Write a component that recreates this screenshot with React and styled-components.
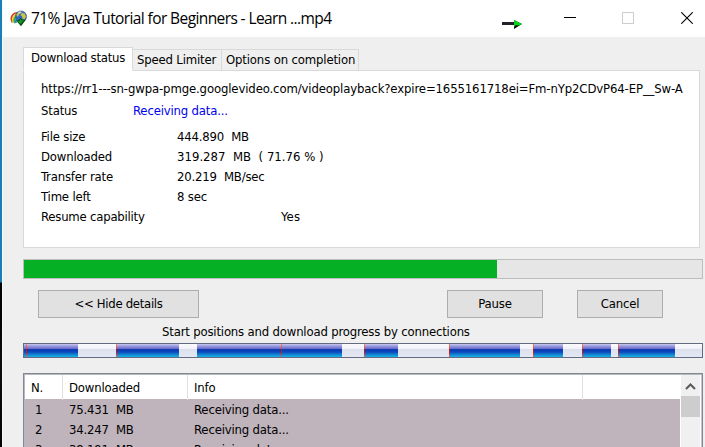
import React from "react";
import styled, { createGlobalStyle } from "styled-components";

const GlobalStyle = createGlobalStyle`
  * { box-sizing: border-box; }
  html, body { margin: 0; padding: 0; overflow: hidden; }
`;

const Desktop = styled.div`
  width: 705px;
  height: 447px;
  padding-left: 2px;
  overflow: hidden;
  background: linear-gradient(#1a80b4 0 282px, #020406 283px 320px, #100c0c 360px, #030405 100%);
`;

const Window = styled.div`
  height: 447px;
  display: flex;
  flex-direction: column;
  background: #efefef;
  border-left: 1px solid #f8f8f8;
  color: #000;
  font: 13px/20px "DejaVu Sans Condensed", "DejaVu Sans", sans-serif;
  font-stretch: condensed;
`;

const Label = styled.span`
  white-space: pre;
  letter-spacing: ${(p) => p.$spacing ?? -0.18}px;
  color: ${(p) => p.$color || "inherit"};
`;

const TitleBar = styled.header`
  height: 37px;
  flex: none;
  display: flex;
  align-items: flex-start;
  background: #fff;
  padding-left: 6px;
`;

const Title = styled.h1`
  margin: 7px 0 0 3px;
  width: 471px;
  white-space: pre;
  font: 400 15.5px/22px "Open Sans", sans-serif;
  letter-spacing: -0.6px;
`;

const TitleIcon = styled.svg`
  display: block;
  flex: none;
  margin: ${(p) => p.$margin};
`;

const Body = styled.main`
  flex: 1;
  display: flex;
  flex-direction: column;
  padding: 10px 2px 0 20px;
`;

const Tabs = styled.nav`
  display: flex;
  align-items: flex-end;
  height: 24px;
  flex: none;
  z-index: 1;
`;

const Tab = styled.button`
  appearance: none;
  height: ${(p) => (p.$active ? 24 : 22)}px;
  width: ${(p) => p.$width}px;
  padding: 0 0 ${(p) => (p.$active ? 2 : 0)}px ${(p) => (p.$active ? 7 : 4)}px;
  text-align: left;
  font: inherit;
  color: inherit;
  line-height: 20px;
  border: 1px solid #d9d9d9;
  border-left-width: ${(p) => (p.$active ? 1 : 0)}px;
  border-bottom-color: ${(p) => (p.$active ? "#fff" : "#d9d9d9")};
  background: ${(p) => (p.$active ? "#fff" : "#efefef")};
`;

const Panel = styled.section`
  width: 677px;
  height: 178px;
  flex: none;
  margin-top: -1px;
  padding: 8px 0 0 17px;
  background: #fff;
  border: 1px solid #d9d9d9;
`;

const Address = styled.div`
  height: 22px;
`;

const Field = styled.div`
  display: grid;
  grid-template-columns: ${(p) => p.$labelWidth}px auto;
  height: 20px;
  margin-bottom: ${(p) => p.$gap || 0}px;
`;

const Progress = styled.div`
  width: 680px;
  height: 20px;
  flex: none;
  margin-top: 11px;
  background: #e6e6e6;
  border: 1px solid #bcbcbc;
`;

const ProgressFill = styled.div`
  width: 473px;
  height: 18px;
  background: #06b025;
`;

const Actions = styled.div`
  display: flex;
  height: 28px;
  flex: none;
  margin: 11px 0 0 15px;
`;

const Button = styled.button`
  appearance: none;
  width: ${(p) => p.$width}px;
  height: 28px;
  margin-right: ${(p) => p.$after}px;
  padding: 0;
  border: 1px solid #adadad;
  background: #e1e1e1;
  font: inherit;
  color: inherit;
`;

const Caption = styled.div`
  height: 25px;
  flex: none;
  padding: 4px 0 0 139px;
`;

const Segments = styled.div`
  width: 680px;
  height: 15px;
  flex: none;
  display: flex;
  border: 1px solid #646a80;
`;

const Segment = styled.div`
  width: ${(p) => p.$width}px;
  height: 13px;
  background: ${(p) =>
    p.$kind === "done"
      ? "linear-gradient(#c9c9ee 0, #9c9ce0 2px, #6464c8 5px, #0c3cb0 5px, #0c48bc 8px, #1078cc 10px, #18b4e8 13px)"
      : p.$kind === "start"
      ? "linear-gradient(#ff8070 0, #f04030 5px, #b80c10 5px, #d82020 9px, #f06050 13px)"
      : "linear-gradient(#fafafe 0, #f0f0f8 5px, #dce0ec 5px, #e4e8f4 13px)"};
`;

const List = styled.section`
  width: 680px;
  height: 90px;
  flex: none;
  margin-top: 15px;
  display: flex;
  border: 1px solid #828790;
  background: #fff;
  box-shadow: inset 1px 1px #b8b8c0, inset -1px 0 #c4c4ca;
  padding: 1px 2px 0 1px;
`;

const Table = styled.div`
  width: 656px;
`;

const HeaderRow = styled.div`
  display: grid;
  grid-template-columns: 38px 125px 395px 1fr;
  height: 24px;
  line-height: 25px;
`;

const HeaderCell = styled.div`
  padding-left: ${(p) => p.$indent}px;
  border-right: ${(p) => (p.$last ? 0 : 1)}px solid #e1e1e1;
`;

const DataRow = styled.div`
  display: grid;
  grid-template-columns: 34px 125px 1fr;
  width: 655px;
  height: 20px;
  padding-left: 10px;
  line-height: 21px;
  background: #bfb3bc;
`;

const ScrollBar = styled.div`
  width: 19px;
  background: #f0f0f0;
`;

const ScrollUp = styled.svg`
  display: block;
`;

const Thumb = styled.div`
  height: 21px;
  background: #cdcdcd;
`;

const segments = [
  ["done", 2], ["start", 1], ["done", 51], ["empty", 38],
  ["start", 1], ["done", 62], ["empty", 18],
  ["done", 84], ["start", 1], ["done", 60], ["empty", 22],
  ["start", 1], ["done", 33], ["empty", 51],
  ["start", 1], ["done", 70], ["empty", 13],
  ["start", 1], ["done", 29], ["empty", 19],
  ["start", 1], ["done", 28], ["empty", 7],
  ["start", 1], ["done", 56], ["empty", 27],
];

const fields = [
  ["File size", "444.890  MB"],
  ["Downloaded", "319.287  MB  ( 71.76 % )", 0.02],
  ["Transfer rate", "20.219  MB/sec"],
  ["Time left", "8 sec"],
];

const rows = [
  ["1", "75.431  MB"],
  ["2", "34.247  MB"],
  ["3", "38.191  MB"],
];

const GlobeIcon = () => (
  <TitleIcon $margin="9px 0 0 0" width="19" height="18" viewBox="0 0 19 18">
    <path d="M3.5 13.5C.5 8.5 4 3.2 9.5 3.8" fill="none" stroke="#d0402a" strokeWidth="1.7" />
    <path d="M4.4 13.5C2.5 9 5.5 4.8 10 5.2" fill="none" stroke="#f4d020" strokeWidth="1.8" />
    <path d="M6 14C4 10 6.5 6.2 11 6.8" fill="none" stroke="#25b050" strokeWidth="1.8" />
    <path d="M7.2 14C5.8 11 8 8 11 8.5" fill="none" stroke="#2d78d8" strokeWidth="1.6" />
    <circle cx="12" cy="7.5" r="5.6" fill="#2f68c0" stroke="#3a5480" strokeWidth=".6" />
    <path d="M7.3 6 9.3 3 12 2.4l-.5 2-1.6 1.2L9 8zM13 3.8l3 1 1 3-1.6 2.6-2-.8-.4-2.5-1.6-.8z" fill="#cfc345" />
    <path d="M9 3.7 11 2.5l2 .5-2.5 1.5z" fill="#c5e2f4" />
    <path d="M7 11.5 10 11l1.5-2.5 1.7 2.2 3.8-.2-5 6.8z" fill="#06500f" />
    <path d="M8.2 12 11 12l.6-2.6.9 2 2.3-.4-3.2 4z" fill="#169d28" />
  </TitleIcon>
);

const ArrowIcon = () => (
  <TitleIcon $margin="19px 0 0 0" width="20" height="11" viewBox="0 0 20 11">
    <path d="M0 3h12v3H0z" fill="#24202a" />
    <path d="M12 1 20 5l-8 5z" fill="#071a08" />
    <path d="M12 1 20 5l-3 1.5-3-.5-2 2z" fill="#08d51b" />
  </TitleIcon>
);

export default function App() {
  return (
    <Desktop>
      <GlobalStyle />
      <Window>
        <TitleBar>
          <GlobeIcon />
          <Title>71% Java Tutorial for Beginners - Learn ...mp4</Title>
          <ArrowIcon />
          <TitleIcon $margin="17px 0 0 42px" width="12" height="1" shapeRendering="crispEdges">
            <path d="M0 0h12v1H0z" fill="#000" />
          </TitleIcon>
          <TitleIcon $margin="12px 0 0 46px" width="12" height="12">
            <path d="M.5.5h11v11H.5z" fill="none" stroke="#ccc" />
          </TitleIcon>
          <TitleIcon $margin="12px 0 0 47px" width="12" height="12">
            <path d="M.3.3 11.7 11.7M11.7.3.3 11.7" stroke="#000" strokeWidth="1.1" />
          </TitleIcon>
        </TitleBar>
        <Body>
          <Tabs>
            <Tab $active $width={110}><Label $spacing={-0.25}>Download status</Label></Tab>
            <Tab $width={89}><Label>Speed Limiter</Label></Tab>
            <Tab $width={137}><Label $spacing={-0.15}>Options on completion</Label></Tab>
          </Tabs>
          <Panel>
            <Address>
              <Label $spacing={-0.13}>https://rr1---sn-gwpa-pmge.googlevideo.com/videoplayback?expire=1655161718ei=Fm-nYp2CDvP64-EP__Sw-A</Label>
            </Address>
            <Field $labelWidth={92} $gap={6}>
              <Label>Status</Label>
              <Label $color="#0000f0">Receiving data...</Label>
            </Field>
            {fields.map(([name, value, spacing]) => (
              <Field key={name} $labelWidth={136}>
                <Label>{name}</Label>
                <Label $spacing={spacing}>{value}</Label>
              </Field>
            ))}
            <Field $labelWidth={240}>
              <Label $spacing={-0.22}>Resume capability</Label>
              <Label $spacing={0.2}>Yes</Label>
            </Field>
          </Panel>
          <Progress><ProgressFill /></Progress>
          <Actions>
            <Button $width={161} $after={248}><Label $spacing={-0.3}>&lt;&lt; Hide details</Label></Button>
            <Button $width={96} $after={34}><Label>Pause</Label></Button>
            <Button $width={86} $after={0}><Label>Cancel</Label></Button>
          </Actions>
          <Caption><Label>Start positions and download progress by connections</Label></Caption>
          <Segments>
            {segments.map(([kind, width], i) => (
              <Segment key={i} $kind={kind} $width={width} />
            ))}
          </Segments>
          <List>
            <Table>
              <HeaderRow>
                <HeaderCell $indent={6}><Label>N.</Label></HeaderCell>
                <HeaderCell $indent={6}><Label>Downloaded</Label></HeaderCell>
                <HeaderCell $indent={6}><Label>Info</Label></HeaderCell>
                <HeaderCell $indent={0} $last />
              </HeaderRow>
              {rows.map(([number, amount]) => (
                <DataRow key={number}>
                  <Label>{number}</Label>
                  <Label>{amount}</Label>
                  <Label>Receiving data...</Label>
                </DataRow>
              ))}
            </Table>
            <ScrollBar>
              <ScrollUp width="19" height="21" viewBox="0 0 19 21">
                <path d="M5 14l4.5-4.5L14 14" fill="none" stroke="#5a5a5a" strokeWidth="2" />
              </ScrollUp>
              <Thumb />
            </ScrollBar>
          </List>
        </Body>
      </Window>
    </Desktop>
  );
}
